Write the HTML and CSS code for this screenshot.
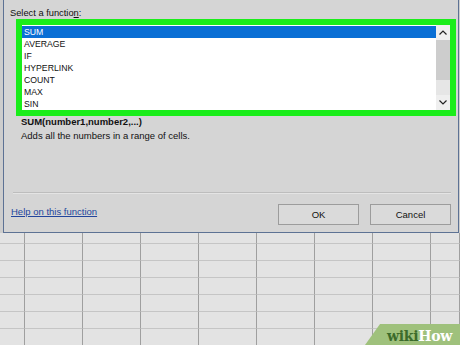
FILE: index.html
```html
<!DOCTYPE html>
<html lang="en">
<head>
  <meta charset="UTF-8">
  <title>Insert Function</title>
  <link rel="stylesheet" href="styles.css">
</head>
<body>
  <div class="dialog">
    <div class="label">Select a functio<u>n</u>:</div>
    <div class="picker">
      <div class="list">
        <div class="item sel">SUM</div>
        <div class="item">AVERAGE</div>
        <div class="item">IF</div>
        <div class="item">HYPERLINK</div>
        <div class="item">COUNT</div>
        <div class="item">MAX</div>
        <div class="item">SIN</div>
      </div>
      <div class="scroll">
        <div class="arrow">
          <svg width="8" height="5" viewBox="0 0 8 5"><polyline points="0.5,4.5 4,1 7.5,4.5" fill="none" stroke="#222" stroke-width="1.2"/></svg>
        </div>
        <div class="thumb"></div>
        <div class="track"></div>
        <div class="arrow">
          <svg width="8" height="5" viewBox="0 0 8 5"><polyline points="0.5,0.5 4,4 7.5,0.5" fill="none" stroke="#222" stroke-width="1.2"/></svg>
        </div>
      </div>
    </div>
    <div class="sig">SUM(number1,number2,...)</div>
    <div class="desc">Adds all the numbers in a range of cells.</div>
    <div class="sep"></div>
    <div class="footer">
      <a class="help" href="#">Help on this function</a>
      <div class="buttons">
        <button class="btn">OK</button>
        <button class="btn">Cancel</button>
      </div>
    </div>
  </div>
  <div class="sheet" id="sheet"></div>
  <div class="badge"><span class="wiki">wiki</span><span class="how">How</span></div>

  <script>
    const sheet = document.getElementById("sheet");
    for (let i = 0; i < 7 * 9; i++) {
      const cell = document.createElement("div");
      cell.className = "cell";
      sheet.appendChild(cell);
    }
  </script>
</body>
</html>
```

FILE: styles.css
```css
* {
  box-sizing: border-box;
}

body {
  margin: 0;
  width: 460px;
  height: 345px;
  overflow: hidden;
  position: relative;
  background: #cdcdcd;
  font-family: "Liberation Sans", Arial, sans-serif;
  color: #111;
}

.dialog {
  margin-left: 3px;
  width: 456px;
  height: 233px;
  background: #d5d5d5;
  border: 1px solid #5d7294;
  border-top: none;
  display: flex;
  flex-direction: column;
}

.label {
  margin: 8px 0 0 6px;
  font-size: 9.3px;
  line-height: 11px;
}

.label u {
  text-decoration-thickness: 1px;
}

.picker {
  margin-left: 12px;
  width: 440px;
  height: 97px;
  border: 6px solid #1aed1a;
  background: #fff;
  display: flex;
}

.list {
  flex: 1;
  padding-top: 1px;
}

.item {
  height: 12px;
  line-height: 12px;
  font-size: 8.7px;
  padding-left: 2px;
}

.sel {
  background: #0a6fd5;
  color: #fff;
}

.scroll {
  width: 14px;
  display: flex;
  flex-direction: column;
  background: #efefef;
}

.arrow {
  height: 15px;
  display: flex;
  align-items: center;
  justify-content: center;
}

.thumb {
  height: 40px;
  background: #cdcdcd;
}

.track {
  flex: 1;
  background: #e6e6e6;
}

.sig {
  margin-left: 17px;
  font-size: 9.5px;
  line-height: 12px;
  font-weight: bold;
}

.desc {
  margin: 2px 0 0 17px;
  font-size: 9.5px;
  line-height: 12px;
}

.sep {
  margin: 50px 0 0 9px;
  width: 438px;
  border-top: 1px solid #bdbdbd;
  border-bottom: 1px solid #e4e4e4;
}

.footer {
  margin-top: 10px;
  display: flex;
  justify-content: space-between;
  padding: 0 7px;
}

.help {
  margin-top: 2px;
  font-size: 9.5px;
  line-height: 12px;
  color: #22459c;
}

.buttons {
  display: flex;
  gap: 11px;
}

.btn {
  width: 81px;
  height: 21px;
  padding: 0;
  font-family: "Liberation Sans", Arial, sans-serif;
  font-size: 9.5px;
  color: #111;
  background: #dadada;
  border: 1px solid #9c9c9c;
}

.sheet {
  width: 460px;
  display: grid;
  grid-template-columns: 25px repeat(7, 58px) 1fr;
  grid-template-rows: 11px repeat(6, 17px);
  background: #e3e3e3;
}

.cell {
  border-right: 1px solid #9f9f9f;
  border-bottom: 1px solid #c5c5c5;
}

.badge {
  position: absolute;
  right: 0;
  bottom: 0;
  width: 95px;
  height: 21px;
  padding: 3px 0 0 22px;
  background: #9fc17c;
  clip-path: polygon(15px 0, 100% 0, 100% 100%, 0 100%);
  font-family: "DejaVu Serif", serif;
  font-weight: bold;
  font-size: 14px;
  line-height: 18px;
  letter-spacing: -0.3px;
}

.wiki {
  color: #3c6b2b;
}

.how {
  color: #fff;
}
```
